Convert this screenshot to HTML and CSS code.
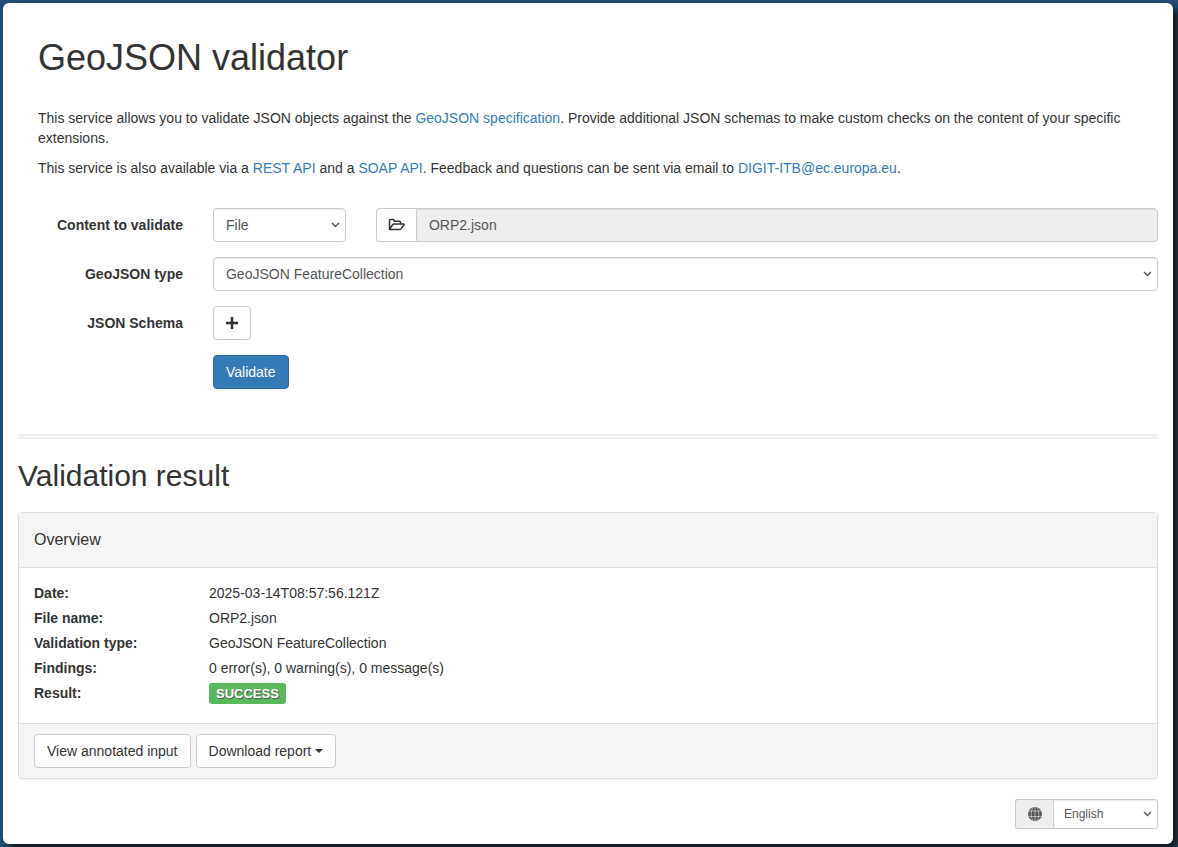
FILE: index.html
```html
<!DOCTYPE html>
<html lang="en">
<head>
<meta charset="utf-8">
<meta name="viewport" content="width=device-width, initial-scale=1">
<title>GeoJSON validator</title>
<link rel="stylesheet" href="styles.css">
</head>
<body>
<main class="card">
  <header class="intro">
    <h1 class="title">GeoJSON validator</h1>
    <p>This service allows you to validate JSON objects against the <a href="#spec">GeoJSON specification</a>. Provide additional JSON schemas to make custom checks on the content of your specific extensions.</p>
    <p>This service is also available via a <a href="#rest">REST API</a> and a <a href="#soap">SOAP API</a>. Feedback and questions can be sent via email to <a href="mailto:DIGIT-ITB@ec.europa.eu">DIGIT-ITB@ec.europa.eu</a>.</p>
  </header>

  <form class="form">
    <div class="form-row">
      <label class="form-label" for="contentType">Content to validate</label>
      <div class="content-fields">
        <select class="control" id="contentType"><option>File</option><option>URI</option><option>Direct input</option></select>
        <div class="input-group">
          <button class="btn addon-btn" type="button" aria-label="Browse files">
            <svg class="icon-folder" viewBox="0 0 17 14" width="17" height="14" aria-hidden="true"><path d="M1.5 11V2.7Q1.5 1.5 2.7 1.5H5.1Q6.2 1.5 6.2 2.6V3.2H11.4Q12.5 3.2 12.5 4.3V6M1.5 11.2L4.4 7Q5 6.1 6 6.1H15.2Q16.6 6.1 15.9 7L13.2 10.6Q12.5 11.5 11.5 11.5H2Q1.2 11.5 1.5 11"/></svg>
          </button>
          <input class="control file-name" type="text" value="ORP2.json" aria-label="File name" readonly>
        </div>
      </div>
    </div>
    <div class="form-row">
      <label class="form-label" for="jsonType">GeoJSON type</label>
      <select class="control" id="jsonType"><option>GeoJSON FeatureCollection</option></select>
    </div>
    <div class="form-row">
      <label class="form-label" for="addSchema">JSON Schema</label>
      <button class="btn add-btn" id="addSchema" type="button" aria-label="Add schema">
        <svg class="icon-plus" viewBox="0 0 12 12" width="12" height="12" aria-hidden="true"><path d="M6 0V12M0 6H12"/></svg>
      </button>
    </div>
    <div class="form-row">
      <button class="btn btn-primary" type="button">Validate</button>
    </div>
  </form>

  <hr class="divider">
  <h2 class="subtitle">Validation result</h2>

  <section class="panel">
    <h3 class="panel-head">Overview</h3>
    <dl class="details">
      <dt>Date:</dt><dd>2025-03-14T08:57:56.121Z</dd>
      <dt>File name:</dt><dd>ORP2.json</dd>
      <dt>Validation type:</dt><dd>GeoJSON FeatureCollection</dd>
      <dt>Findings:</dt><dd>0 error(s), 0 warning(s), 0 message(s)</dd>
      <dt>Result:</dt><dd><span class="badge">SUCCESS</span></dd>
    </dl>
    <div class="panel-foot">
      <button class="btn" type="button">View annotated input</button>
      <button class="btn" type="button">Download report<span class="caret"></span></button>
    </div>
  </section>

  <footer class="language">
    <label class="language-icon" for="language" aria-label="Language">
      <svg viewBox="0 0 14 14" width="14" height="14" aria-hidden="true"><circle cx="7" cy="7" r="7" fill="#555"/><path d="M7 0V14M0.5 4H13.5M0.5 9.5H13.5M5 0.3C2.6 4 2.6 10 5 13.7M9 0.3C11.4 4 11.4 10 9 13.7" fill="none" stroke="#eee" stroke-width="0.6"/></svg>
    </label>
    <select class="control control-small" id="language"><option>English</option></select>
  </footer>
</main>
</body>
</html>
```
FILE: styles.css
```css
* { box-sizing: border-box; }
body {
  margin: 0;
  padding: 3px 5px 3px 3px;
  background: #234f77;
  color: #333;
  font: 14px/20px "Liberation Sans", Arial, sans-serif;
}
.card {
  padding: 0 15px 15px;
  border-radius: 6px;
  background: #fff;
  box-shadow: 5px 5px 8px #111;
}
a { color: #337ab7; text-decoration: none; }
.intro { padding: 35px 20px 0; }
.intro p { margin: 0 0 10px; }
.title { margin: 0 0 30px; font-size: 36px; line-height: 40px; }
.title, .subtitle, .panel-head { font-weight: 400; }

.form { display: grid; gap: 15px; margin: 30px -15px 0; }
.form-row {
  display: grid;
  grid-template-columns: calc((100% + 15px) / 6 - 15px) minmax(0, 1fr);
  column-gap: 30px;
  padding-right: 15px;
}
.form-row > :not(.form-label) { grid-column: 2; }
.form-label { padding-top: 7px; text-align: right; font-weight: 700; }
.content-fields {
  display: grid;
  grid-template-columns: minmax(0, 133fr) minmax(0, 782fr);
  gap: 30px;
}
.control {
  width: 100%;
  height: 34px;
  padding: 6px 12px;
  border: 1px solid #ccc;
  border-radius: 4px;
  background-color: #fff;
  color: #555;
  font: inherit;
  box-shadow: inset 0 1px 1px rgba(0, 0, 0, 0.08);
}
select.control {
  appearance: none;
  background-image: url("data:image/svg+xml,%3Csvg xmlns='http://www.w3.org/2000/svg' width='9' height='6'%3E%3Cpath d='M1 1L4.5 4.5L8 1' fill='none' stroke='%23555' stroke-width='1.4'/%3E%3C/svg%3E");
  background-repeat: no-repeat;
  background-position: right 5px center;
}
.input-group { display: flex; }
.addon-btn { width: 40px; }
.form-row .addon-btn { border-right: 0; border-radius: 4px 0 0 4px; }
.file-name { flex: 1; min-width: 0; border-radius: 0 4px 4px 0; background-color: #eee; }
.btn {
  display: inline-flex;
  align-items: center;
  justify-content: center;
  height: 34px;
  padding: 6px 12px;
  border: 1px solid #ccc;
  border-radius: 4px;
  background: #fff;
  color: #333;
  font: inherit;
  white-space: nowrap;
}
.btn svg { flex: none; fill: none; stroke: #333; }
.icon-folder { stroke-width: 1.5; }
.icon-plus { stroke-width: 2.6; }
.add-btn { width: 38px; }
.form-row .btn { justify-self: start; }
.btn-primary { border-color: #2e6da4; background: #337ab7; color: #fff; }

.divider { margin: 45px 0 20px; border: 0; border-top: 5px double #eee; }
.subtitle { margin: 0 0 20px; font-size: 30px; line-height: 33px; }

.panel {
  border: 1px solid #ddd;
  border-radius: 4px;
  box-shadow: 0 1px 1px rgba(0, 0, 0, 0.05);
  overflow: hidden;
}
.panel-head {
  margin: 0;
  padding: 17px 15px;
  border-bottom: 1px solid #ddd;
  background: #f5f5f5;
  font-size: 16px;
}
.details {
  display: grid;
  grid-template-columns: 175px 1fr;
  row-gap: 5px;
  margin: 0;
  padding: 15px 15px 19px;
}
.details dt { font-weight: 700; }
.details dd { margin: 0; }
.badge {
  display: block;
  width: fit-content;
  padding: 0 7px;
  border-radius: 3px;
  background: #5cb85c;
  color: #fff;
  font-size: 13px;
  line-height: 21px;
  font-weight: 700;
  text-shadow: 1px 1px 1px #555;
}
.panel-foot {
  display: flex;
  gap: 5px;
  padding: 10px 15px;
  border-top: 1px solid #ddd;
  background: #f5f5f5;
}
.caret {
  margin-left: 4px;
  border: 4px solid transparent;
  border-top-color: #333;
  border-bottom: 0;
}
.language { display: flex; width: 143px; margin: 20px 0 0 auto; }
.language-icon {
  display: flex;
  flex: none;
  align-items: center;
  justify-content: center;
  width: 38px;
  border: 1px solid #ccc;
  border-right: 0;
  border-radius: 3px 0 0 3px;
  background: #eee;
}
select.control-small {
  height: 30px;
  padding: 5px 10px;
  border-radius: 0 3px 3px 0;
  font-size: 12px;
  line-height: 18px;
}
```
